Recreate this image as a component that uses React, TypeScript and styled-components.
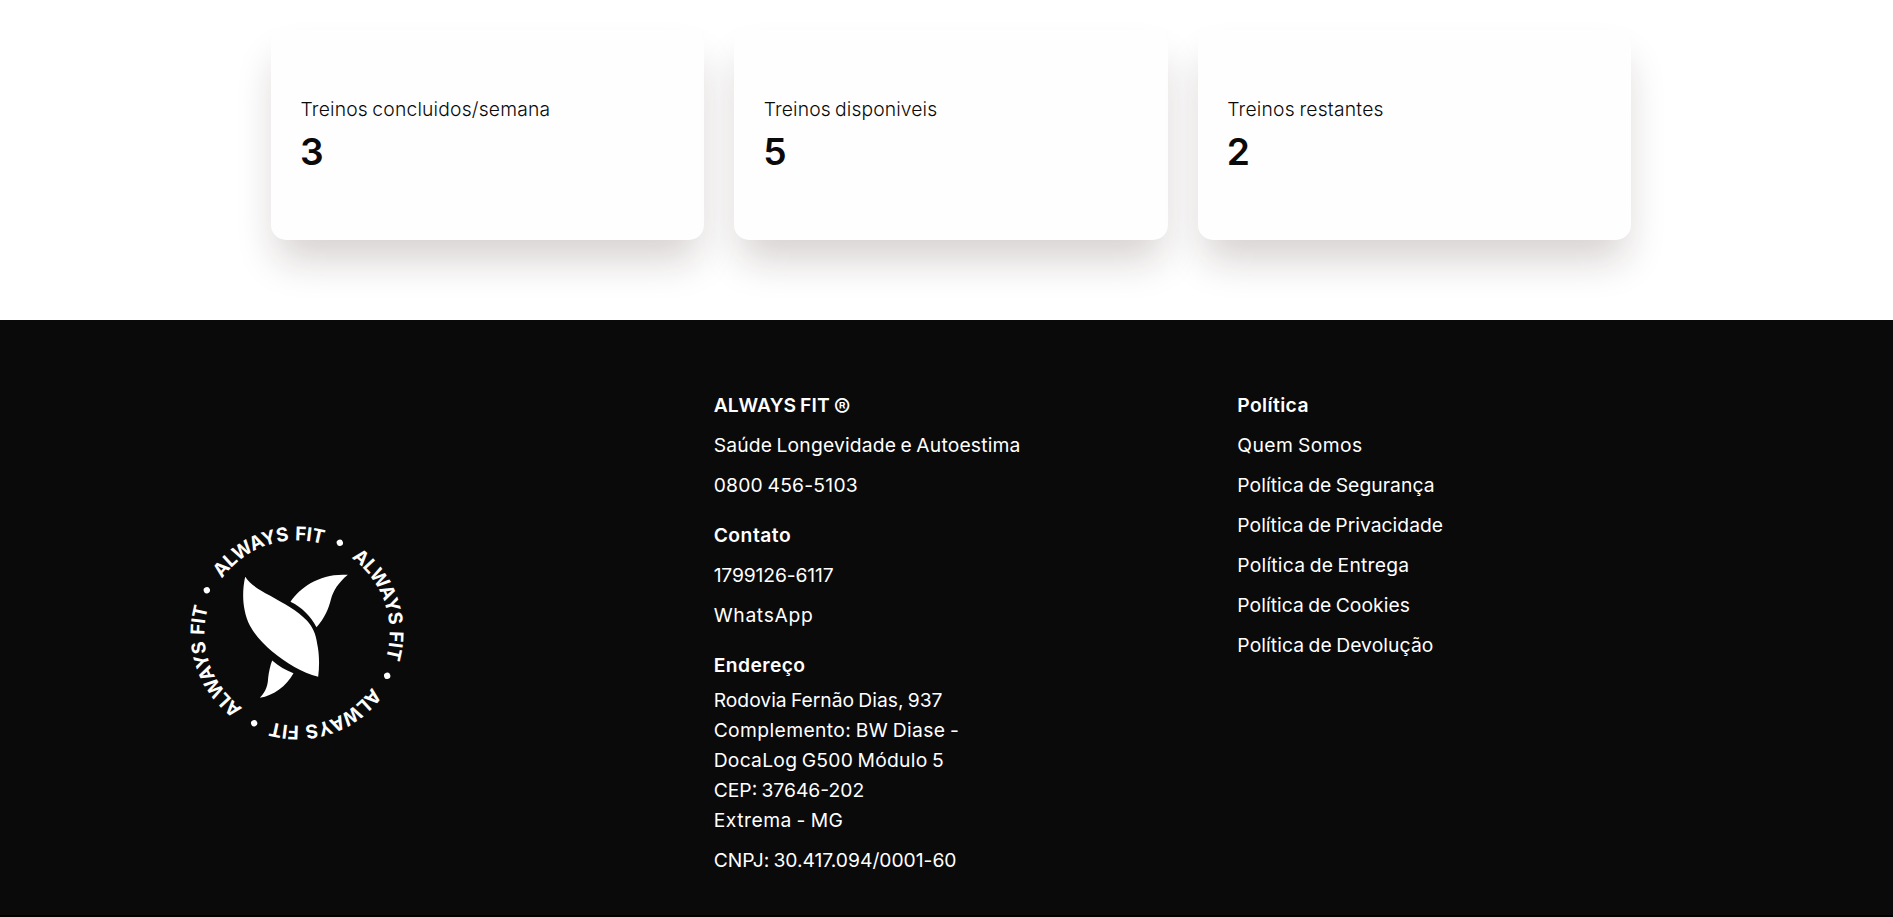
import React from 'react';
import styled, { createGlobalStyle } from 'styled-components';

const GlobalStyle = createGlobalStyle`
  *, *::before, *::after { box-sizing: border-box; }
  body {
    margin: 0;
    background: #fff;
    color: #0a0a0a;
    font-family: Inter, "Liberation Sans", sans-serif;
    font-size: 19.3px;
    line-height: 30px;
    word-spacing: -1.2px;
  }
`;

const Page = styled.div`
  display: flex;
  flex-direction: column;
  height: 917px;
  overflow: hidden;
  background: #040000;
`;

const Stats = styled.main`
  display: flex;
  justify-content: center;
  flex: 0 0 320px;
  padding: 30px 0 80px;
  background: #fff;
`;

const StatGrid = styled.div`
  display: grid;
  grid-template-columns: repeat(3, 1fr);
  gap: 30px;
  width: 1360px;
  margin-left: 9px;
`;

const Card = styled.section`
  padding: 64px 30px 0;
  border-radius: 15px;
  background: #fefefe;
  box-shadow: 0 25px 40px -6px rgba(45, 20, 15, 0.2);
`;

const CardLabel = styled.p<{ $tracking: number }>`
  margin: 0 0 0 -0.5px;
  font-weight: 300;
  letter-spacing: ${(p) => p.$tracking}px;
  white-space: nowrap;
`;

const CardValue = styled.strong`
  display: block;
  margin-left: -1px;
  font-size: 37.2px;
  font-weight: 600;
  line-height: 55px;
`;

const Footer = styled.footer`
  display: grid;
  grid-template-columns: repeat(3, 1fr);
  gap: 57px;
  flex: 0 0 595px;
  padding: 70px 189px 40px 190px;
  background: #0a0a0a;
  color: #fff;
`;

const Brand = styled.div`
  display: flex;
  align-items: center;
`;

const Logo = styled.svg`
  display: block;
  width: 214px;
  height: 214px;
  fill: #fff;
  overflow: visible;
`;

const RingText = styled.text`
  font-size: 57px;
  font-weight: 700;
  letter-spacing: -1.1px;
  word-spacing: 6px;
  text-anchor: middle;
`;

const Column = styled.div`
  display: flex;
  flex-direction: column;
  gap: 20px;
`;

const Group = styled.div<{ $gap?: number }>`
  display: flex;
  flex-direction: column;
  gap: ${(p) => p.$gap ?? 10}px;
`;

const Heading = styled.h3<{ $tracking: number }>`
  margin: 0;
  font-size: inherit;
  font-weight: 600;
  letter-spacing: ${(p) => p.$tracking}px;
`;

const Registered = styled.span`
  font-size: 25px;
  font-weight: 400;
  line-height: 0;
  vertical-align: -4.5px;
`;

const Line = styled.span<{ $tracking: number }>`
  letter-spacing: ${(p) => p.$tracking}px;
  white-space: nowrap;
`;

const Address = styled.address`
  display: flex;
  flex-direction: column;
  font-style: normal;
`;

type Entry = [text: string, tracking: number];

const stats: { label: string; tracking: number; value: number }[] = [
  { label: 'Treinos concluidos/semana', tracking: 0.18, value: 3 },
  { label: 'Treinos disponiveis', tracking: 0.11, value: 5 },
  { label: 'Treinos restantes', tracking: 0.23, value: 2 },
];

const company: Entry[] = [
  ['Saúde Longevidade e Autoestima', 0.17],
  ['0800 456-5103', 0.23],
];

const contact: Entry[] = [
  ['1799126-6117', -0.14],
  ['WhatsApp', 0.66],
];

const address: Entry[] = [
  ['Rodovia Fernão Dias, 937', 0],
  ['Complemento: BW Diase -', 0.37],
  ['DocaLog G500 Módulo 5', 0.25],
  ['CEP: 37646-202', 0],
  ['Extrema - MG', 0.5],
];

const policies: Entry[] = [
  ['Quem Somos', 0.42],
  ['Política de Segurança', 0.06],
  ['Política de Privacidade', 0.03],
  ['Política de Entrega', 0.22],
  ['Política de Cookies', 0.06],
  ['Política de Devolução', 0.1],
];

const Lines = ({ items }: { items: Entry[] }) => (
  <>
    {items.map(([text, tracking]) => (
      <Line key={text} $tracking={tracking}>{text}</Line>
    ))}
  </>
);

const quarters = [0, 90, 180, 270];

const AlwaysFitLogo = () => (
  <Logo viewBox="-321 -321 642 642" role="img" aria-label="Always Fit">
    <defs>
      <path id="ring" d="M0 278A278 278 0 0 1 0 -278A278 278 0 0 1 0 278" />
    </defs>
    {quarters.map((turn) => (
      <g key={turn}>
        <RingText transform={`rotate(${turn - 19})`}>
          <textPath href="#ring" startOffset="50%">ALWAYS FIT</textPath>
        </RingText>
        <circle cx="211.8" cy="-211.8" r="9.5" transform={`rotate(${turn - 19.6})`} />
      </g>
    ))}
    <g transform="translate(-201.5 -187.5)">
      <path d="M46 19C36 65 37 118 60 165C78 198 100 219 127 243C170 277 216 307 265 319C269 287 269 252 262 220C258 190 249 170 231 150C203 120 162 99 120 75C87 57 62 43 46 19Z" />
      <path d="M182 94C211 49 274 7 354 13C324 38 311 61 304 84C296 117 283 145 260 170C243 139 218 111 182 94Z" />
      <path d="M127 270C147 287 168 300 191 308C169 348 132 374 90 382C110 362 114 342 115 322C117 304 121 286 127 270Z" />
    </g>
  </Logo>
);

export default function App() {
  return (
    <>
      <GlobalStyle />
      <Page>
        <Stats>
          <StatGrid>
            {stats.map((s) => (
              <Card key={s.label}>
                <CardLabel $tracking={s.tracking}>{s.label}</CardLabel>
                <CardValue>{s.value}</CardValue>
              </Card>
            ))}
          </StatGrid>
        </Stats>
        <Footer>
          <Brand>
            <AlwaysFitLogo />
          </Brand>
          <Column>
            <Group>
              <Heading $tracking={0.15}>
                ALWAYS FIT <Registered>®</Registered>
              </Heading>
              <Lines items={company} />
            </Group>
            <Group>
              <Heading $tracking={0.5}>Contato</Heading>
              <Lines items={contact} />
            </Group>
            <Group $gap={5}>
              <Heading $tracking={0.42}>Endereço</Heading>
              <Group>
                <Address>
                  <Lines items={address} />
                </Address>
                <Line $tracking={-0.02}>CNPJ: 30.417.094/0001-60</Line>
              </Group>
            </Group>
          </Column>
          <Column>
            <Group>
              <Heading $tracking={0.38}>Política</Heading>
              <Lines items={policies} />
            </Group>
          </Column>
        </Footer>
      </Page>
    </>
  );
}
